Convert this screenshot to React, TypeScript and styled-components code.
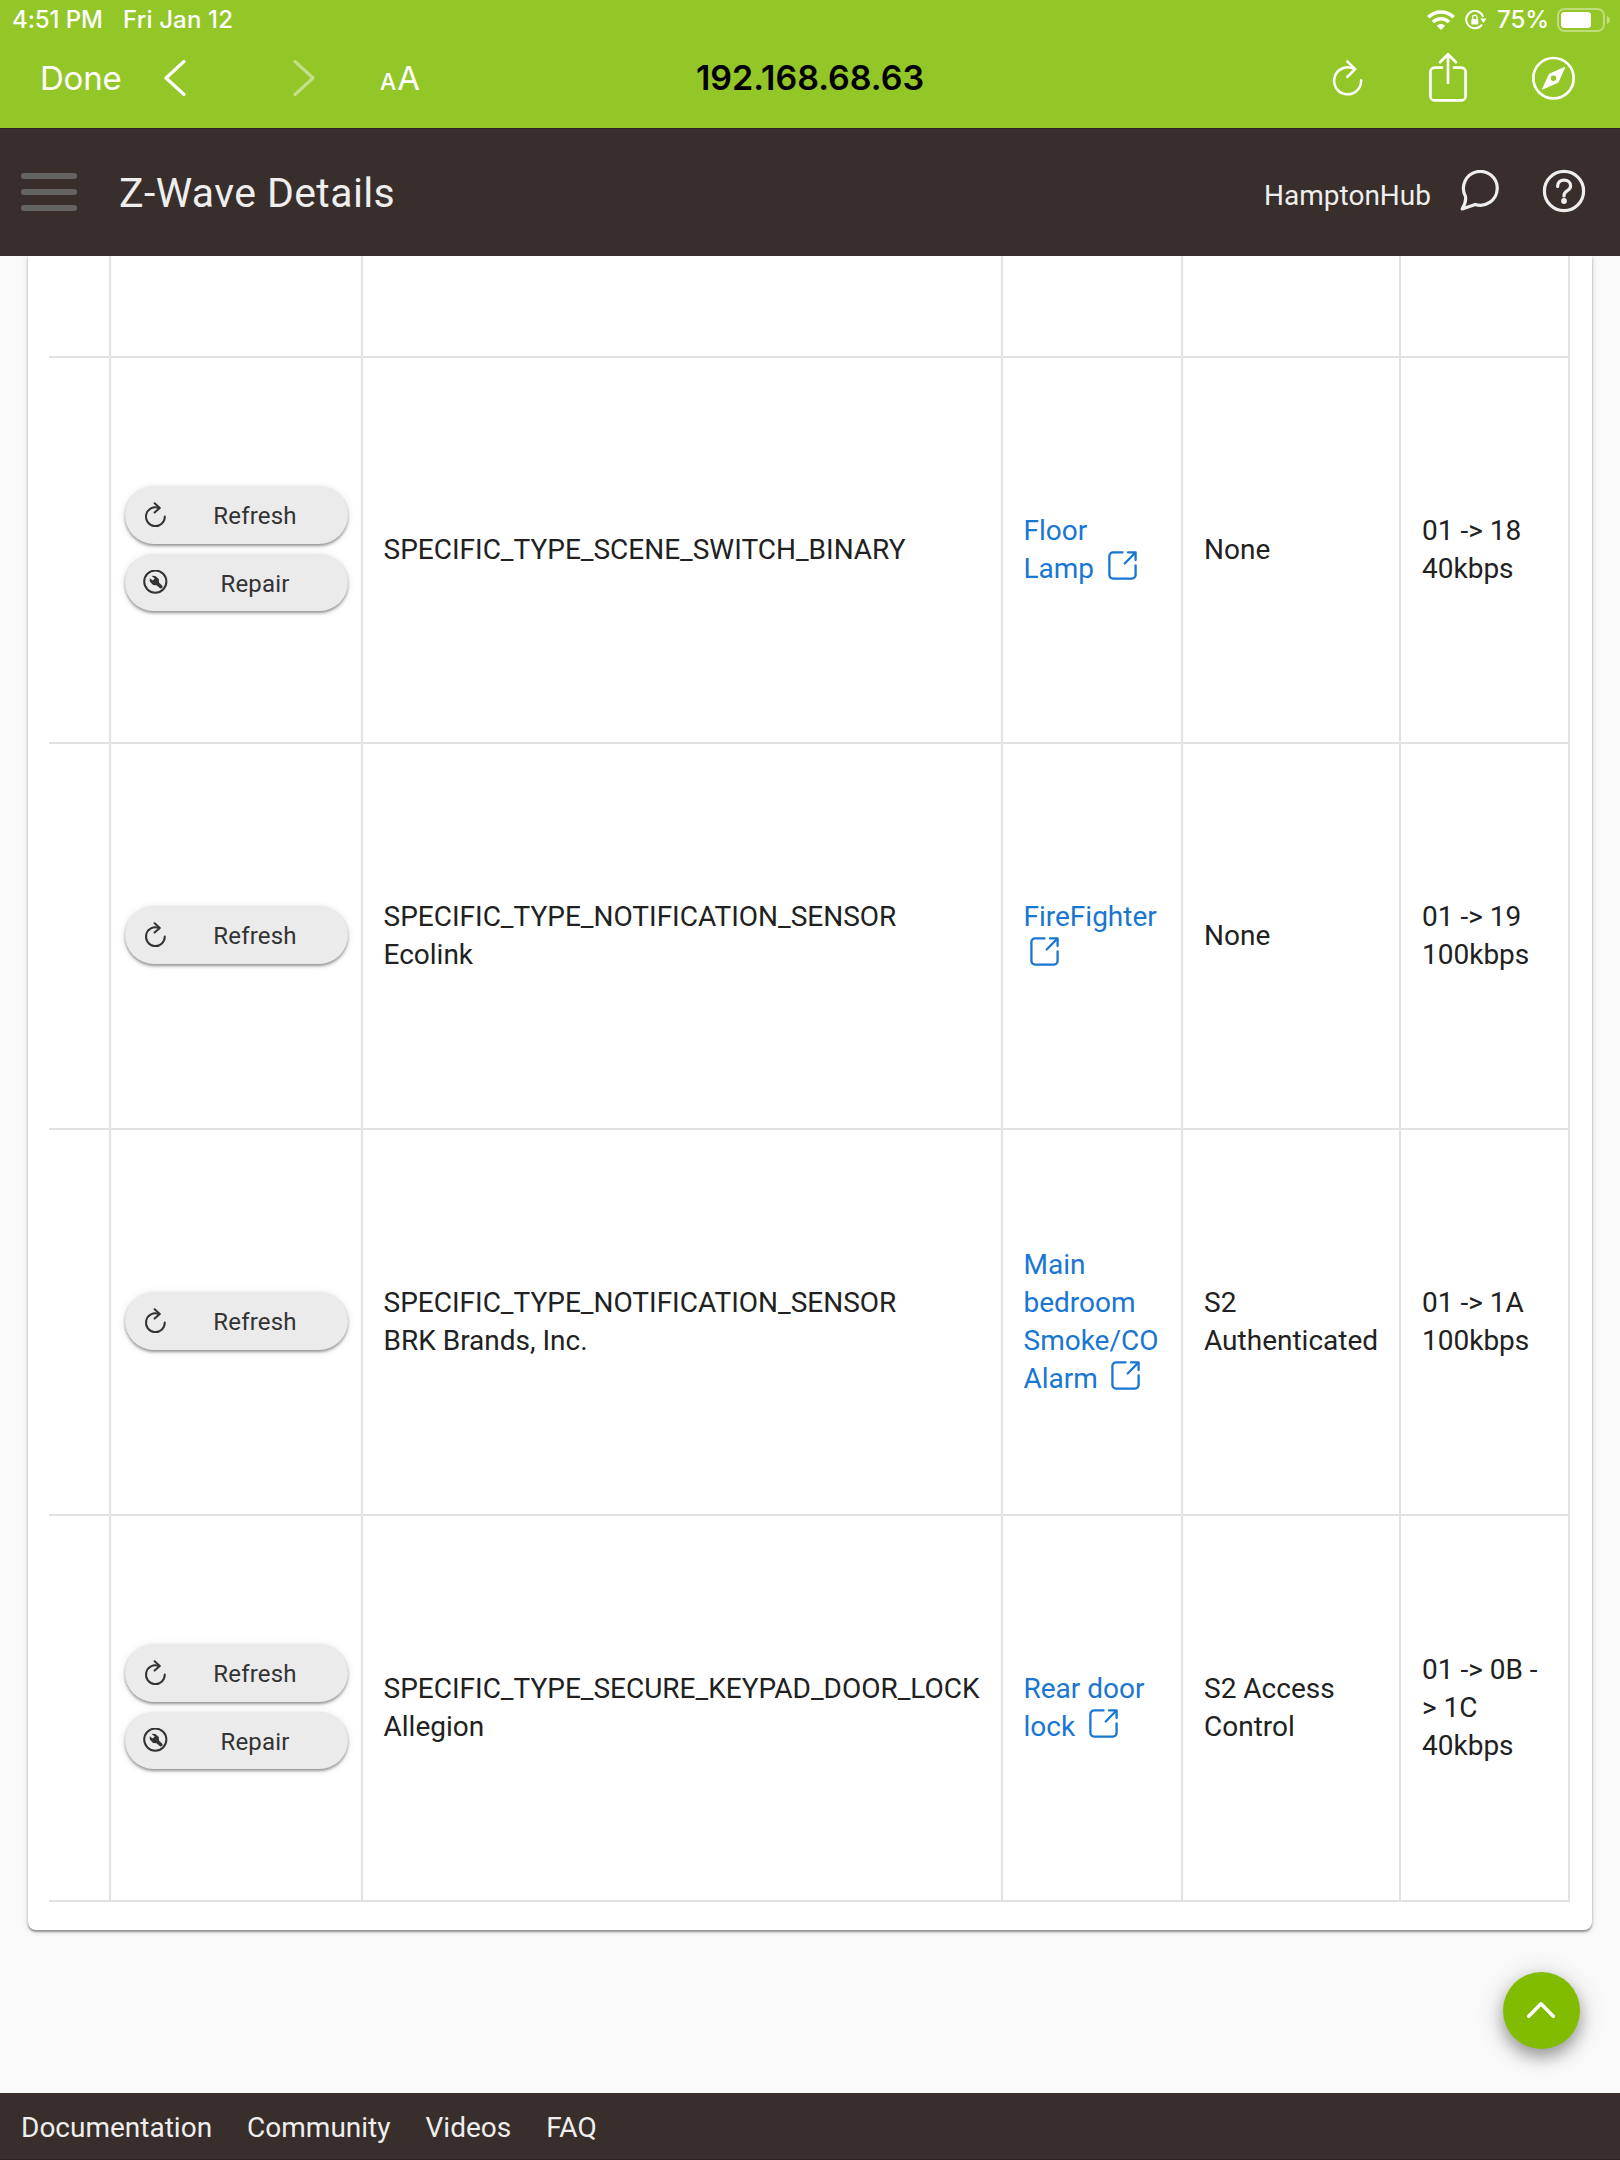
import React from "react";
import styled, { createGlobalStyle } from "styled-components";

const GlobalStyle = createGlobalStyle`
  * { box-sizing: border-box; }
  html, body { margin: 0; padding: 0; }
  body { background: #fafafa; font-family: Roboto, "Liberation Sans", sans-serif; }
  svg { display: block; flex: none; }
`;

const Page = styled.div`
  width: 1620px;
  height: 2160px;
  display: flex;
  flex-direction: column;
  overflow: hidden;
  background: #fafafa;
  position: relative;
`;

const BrowserChrome = styled.header`
  height: 128px;
  flex: none;
  background: #93c627;
  color: #fff;
  font-family: Inter, "Liberation Sans", sans-serif;
`;

const StatusBar = styled.div`
  height: 40px;
  display: flex;
  align-items: center;
  padding: 0 9px 0 12px;
  font-size: 24px;
  font-weight: 500;
  line-height: 40px;
`;

const StatusText = styled.span<{ $width: number; $spacing?: number; $gap?: number }>`
  width: ${(p) => p.$width}px;
  letter-spacing: ${(p) => p.$spacing ?? 0}px;
  margin-right: ${(p) => p.$gap ?? 0}px;
  white-space: nowrap;
`;

const StatusIcons = styled.div`
  display: flex;
  align-items: center;
  gap: 10px;
  margin-left: auto;
`;

const NavBar = styled.nav`
  height: 76px;
  display: grid;
  grid-template-columns: 1fr auto 1fr;
  align-items: center;
`;

const NavGroup = styled.div`
  display: flex;
  align-items: center;
  padding-left: 40px;
`;

const NavActions = styled.div`
  display: flex;
  align-items: center;
  justify-content: flex-end;
  gap: 64px;
  padding: 0 44px 0 0;
`;

const HistoryButtons = styled.div`
  display: flex;
  gap: 107px;
`;

const Done = styled.span`
  width: 124px;
  font-size: 33px;
  line-height: 40px;
  letter-spacing: -0.2px;
`;

const TextSize = styled.span`
  margin-left: 65px;
  display: flex;
  align-items: baseline;
  font-size: 33px;
  line-height: 40px;
  padding-top: 3px;
`;

const SmallA = styled.span`
  font-size: 23px;
  font-weight: 500;
  margin-right: 1px;
`;

const Address = styled.span`
  font-size: 34px;
  font-weight: 600;
  line-height: 40px;
  letter-spacing: 0;
  color: #000;
`;

const AppBar = styled.header`
  height: 128px;
  flex: none;
  display: flex;
  align-items: center;
  padding: 0 34px 0 21px;
  background: #382e2c;
  border-top: 1px solid #2a2422;
  color: #eee;
`;

const MenuButton = styled.div`
  width: 56px;
  display: flex;
  flex-direction: column;
  gap: 10.4px;
  margin-right: 42px;
  padding-bottom: 1px;
`;

const MenuBar = styled.div`
  height: 6px;
  border-radius: 3px;
  background: #646462;
`;

const Title = styled.h1`
  flex: 1;
  margin: 0;
  font-size: 41px;
  font-weight: 400;
  line-height: 50px;
  letter-spacing: 0.4px;
`;

const HubName = styled.span`
  font-size: 28px;
  line-height: 38px;
  margin: 7px 29px 0 0;
`;

const HeaderIcons = styled.div`
  display: flex;
  align-items: center;
  gap: 42px;
  padding-bottom: 4px;
`;

const Content = styled.main`
  flex: 1;
  min-height: 0;
  overflow: hidden;
  padding: 0 28px;
`;

const Card = styled.section`
  height: 1674px;
  padding: 0 22px 0 21px;
  background: #fff;
  border-radius: 0 0 8px 8px;
  box-shadow: 0 2px 2px rgba(0, 0, 0, 0.36), 0 1px 6px rgba(0, 0, 0, 0.16);
`;

const Row = styled.div<{ $height: number }>`
  height: ${(p) => p.$height}px;
  display: grid;
  grid-template-columns: 62px 252px 640px 180px 218px 169px;
  border-bottom: 2px solid #e2e2e2;
`;

const Cell = styled.div<{ $indent?: number }>`
  display: flex;
  flex-direction: column;
  justify-content: center;
  padding-left: ${(p) => p.$indent ?? 20}px;
  border-right: 2px solid #e2e2e2;
  font-size: 28px;
  line-height: 38px;
  color: #212121;
  white-space: pre-line;
`;

const ActionCell = styled(Cell)`
  gap: 10px;
  padding: 0 14px 3px;
`;

const ActionButton = styled.button<{ $height?: number }>`
  width: 223px;
  height: ${(p) => p.$height ?? 58}px;
  display: flex;
  align-items: center;
  border: 0;
  border-radius: 29px;
  padding: 0 0 0 18px;
  background: #ebebeb;
  color: #333;
  font: 400 24px/34px Roboto, sans-serif;
  letter-spacing: 0.2px;
  box-shadow: 0 2px 3px rgba(0, 0, 0, 0.38), 0 1px 8px rgba(0, 0, 0, 0.1);
`;

const ActionLabel = styled.span`
  flex: 1;
  text-align: center;
  padding: 2px 7px 0 0;
`;

const DeviceLink = styled.a`
  color: #1976d2;
  text-decoration: none;
  svg { display: inline-block; margin-left: 6.5px; vertical-align: -2px; }
`;

const ScrollTop = styled.button`
  position: absolute;
  left: 1503px;
  top: 1972px;
  width: 77px;
  height: 77px;
  display: flex;
  align-items: center;
  justify-content: center;
  border: 0;
  padding: 0 1px 1px 0;
  border-radius: 50%;
  background: #82bc00;
  box-shadow: 0 8px 16px rgba(0, 0, 0, 0.32), 0 4px 30px rgba(0, 0, 0, 0.16);
`;

const Footer = styled.footer`
  height: 67px;
  flex: none;
  position: relative;
  display: flex;
  align-items: center;
  gap: 35px;
  padding: 3px 0 0 21px;
  background: #382e2c;
  border-bottom: 1px solid #2a2422;
  color: #eee;
  font-size: 28px;
  line-height: 38px;
`;

const WifiIcon = () => (
  <svg width="28" height="20" viewBox="0 0 28 20" fill="none" stroke="#fff" strokeWidth="3.5">
    <path d="M1.3 7.2C8.4.2 19.6.2 26.7 7.2" />
    <path d="M6 12C10.6 7.6 17.4 7.6 22 12" />
    <path d="M14 20l-4.2-4.3c2.4-2.3 6-2.3 8.4 0z" fill="#fff" stroke="none" />
  </svg>
);

const RotationLockIcon = () => (
  <svg width="22" height="20" viewBox="0 0 22 20" fill="none" stroke="#fff" strokeWidth="2">
    <path d="M18.2 7A8.7 8.7 0 1 0 17 14.6" />
    <path d="M15.2 8.5h6.3l-3.1 4.5z" fill="#fff" stroke="none" />
    <rect x="6.3" y="9" width="7" height="5.5" rx="1" fill="#fff" stroke="none" />
    <path d="M7.6 9.2V7.4a2.2 2.2 0 0 1 4.4 0v1.8" strokeWidth="1.3" />
  </svg>
);

const BatteryIcon = () => (
  <svg width="54" height="24" viewBox="0 0 54 24">
    <rect x="1" y="1" width="46" height="22" rx="6.5" fill="none" stroke="#fff" strokeOpacity=".4" strokeWidth="2" />
    <rect x="4" y="4" width="30" height="16" rx="3.5" fill="#fff" />
    <path d="M50 8c3.8 1.6 3.8 6.4 0 8z" fill="#fff" fillOpacity=".45" />
  </svg>
);

const Chevron = ({ forward = false }: { forward?: boolean }) => (
  <svg width="22" height="38" viewBox="0 0 22 38" fill="none" stroke="#fff" strokeWidth="3.2" strokeLinecap="round" strokeLinejoin="round" opacity={forward ? 0.45 : 1}>
    <path d={forward ? "M2 2.5L20 19 2 35.5" : "M20 2.5L2 19l18 16.5"} />
  </svg>
);

const ReloadIcon = () => (
  <svg width="33" height="38" viewBox="0 0 33 38" fill="none" stroke="#fff" strokeWidth="2.5" strokeLinecap="round" strokeLinejoin="round">
    <path d="M21.5 9.7A13.5 13.5 0 1 0 29.1 21.3" />
    <path d="M15.2 2.4l8 7.8-8 7.8" />
  </svg>
);

const ShareIcon = () => (
  <svg width="39" height="52" viewBox="0 0 39 52" fill="none" stroke="#fff" strokeWidth="2.7" strokeLinecap="round" strokeLinejoin="round">
    <path d="M13 15.6H5.6a4.2 4.2 0 0 0-4.2 4.2v24.4a4.2 4.2 0 0 0 4.2 4.2h26.8a4.2 4.2 0 0 0 4.2-4.2V19.8a4.2 4.2 0 0 0-4.2-4.2H25" />
    <path d="M19 31V2.2M11 10.2l8-8 8 8" />
  </svg>
);

const CompassIcon = () => (
  <svg width="44" height="44" viewBox="0 0 44 44" fill="none" stroke="#fff" strokeWidth="2.7">
    <circle cx="21.5" cy="22.2" r="20.2" />
    <path fillRule="evenodd" fill="#fff" stroke="#fff" strokeWidth="1" strokeLinejoin="round" d="M32.7 11.4L26.1 26.2 10.5 33.2 17.3 18.2zM21.5 18.9a3.3 3.3 0 1 0 0 6.6 3.3 3.3 0 0 0 0-6.6z" />
  </svg>
);

const ChatIcon = () => (
  <svg width="40" height="41" viewBox="0 0 40 41" fill="none" stroke="#eee" strokeWidth="3.2" strokeLinejoin="round">
    <path d="M5.4 26.2A16.9 16.9 0 1 1 15.2 34.4L2.2 38.9Q6.6 31.8 5.4 26.2z" />
  </svg>
);

const HelpIcon = () => (
  <svg width="44" height="44" viewBox="0 0 44 44" fill="none" stroke="#eee" strokeWidth="3.2" strokeLinecap="round">
    <circle cx="22" cy="22" r="19.6" />
    <path d="M15.6 17.4c0-3.9 2.7-6.3 6.5-6.3s6.5 2.3 6.5 5.8c0 4.9-6.6 4.7-6.6 9.3v.8" />
    <circle cx="22" cy="32" r="2.9" fill="#eee" stroke="none" />
  </svg>
);

const RefreshIcon = () => (
  <svg width="26" height="26" viewBox="0 0 26 26" fill="none" stroke="#333" strokeWidth="2" strokeLinecap="round" strokeLinejoin="round">
    <path d="M15.6 5.8A9.4 9.4 0 1 0 21.8 14.6" />
    <path d="M11.6 1.2l5.2 4.7-5.2 4.7" />
  </svg>
);

const RepairIcon = () => (
  <svg width="26" height="26" viewBox="0 0 26 26">
    <circle cx="12.3" cy="11.6" r="11.1" fill="none" stroke="#333" strokeWidth="2" />
    <path fill="#333" d="M8.4 5.8l3.9.1 3.5 3.2.2 3.4 3.5 3.6-.2 2-2 .4-3.8-3.2-3.4-.4-3.3-3.4-.1-3.3 3.1 2.3 1.9-2z" />
  </svg>
);

const ExternalIcon = () => (
  <svg width="29" height="29" viewBox="0 0 29 29" fill="none" stroke="#1976d2" strokeWidth="2.3" strokeLinecap="round" strokeLinejoin="round">
    <path d="M14.5 1.4H5A3.6 3.6 0 0 0 1.4 5v19A3.6 3.6 0 0 0 5 27.6h19A3.6 3.6 0 0 0 27.6 24V14.5" />
    <path d="M20 1.4h7.6V9M27.2 1.8L16.7 12.5" />
  </svg>
);

interface Device {
  type: string;
  repair?: boolean;
  name: string;
  security: string;
  route: string;
}

const devices: Device[] = [
  { type: "SPECIFIC_TYPE_SCENE_SWITCH_BINARY", repair: true, name: "Floor\nLamp ", security: "None", route: "01 -> 18\n40kbps" },
  { type: "SPECIFIC_TYPE_NOTIFICATION_SENSOR\nEcolink", name: "FireFighter\n", security: "None", route: "01 -> 19\n100kbps" },
  { type: "SPECIFIC_TYPE_NOTIFICATION_SENSOR\nBRK Brands, Inc.", name: "Main\nbedroom\nSmoke/CO\nAlarm ", security: "S2\nAuthenticated", route: "01 -> 1A\n100kbps" },
  { type: "SPECIFIC_TYPE_SECURE_KEYPAD_DOOR_LOCK\nAllegion", repair: true, name: "Rear door\nlock ", security: "S2 Access\nControl", route: "01 -> 0B -\n> 1C\n40kbps" },
];

export default function App() {
  return (
    <Page>
      <GlobalStyle />
      <BrowserChrome>
        <StatusBar>
          <StatusText $width={88} $gap={23} $spacing={-0.1}>4:51 PM</StatusText>
          <StatusText $width={112} $spacing={0.15}>Fri Jan 12</StatusText>
          <StatusIcons>
            <WifiIcon />
            <RotationLockIcon />
            <StatusText $width={50}>75%</StatusText>
            <BatteryIcon />
          </StatusIcons>
        </StatusBar>
        <NavBar>
          <NavGroup>
            <Done>Done</Done>
            <HistoryButtons>
              <Chevron />
              <Chevron forward />
            </HistoryButtons>
            <TextSize><SmallA>A</SmallA>A</TextSize>
          </NavGroup>
          <Address>192.168.68.63</Address>
          <NavActions>
            <ReloadIcon />
            <ShareIcon />
            <CompassIcon />
          </NavActions>
        </NavBar>
      </BrowserChrome>
      <AppBar>
        <MenuButton><MenuBar /><MenuBar /><MenuBar /></MenuButton>
        <Title>Z-Wave Details</Title>
        <HubName>HamptonHub</HubName>
        <HeaderIcons>
          <ChatIcon />
          <HelpIcon />
        </HeaderIcons>
      </AppBar>
      <Content>
        <Card>
          <Row $height={102}>
            <Cell /><Cell /><Cell /><Cell /><Cell /><Cell />
          </Row>
          {devices.map((d) => (
            <Row key={d.name} $height={386}>
              <Cell />
              <ActionCell>
                <ActionButton><RefreshIcon /><ActionLabel>Refresh</ActionLabel></ActionButton>
                {d.repair && <ActionButton $height={57}><RepairIcon /><ActionLabel>Repair</ActionLabel></ActionButton>}
              </ActionCell>
              <Cell $indent={20.5}>{d.type}</Cell>
              <Cell $indent={20.5}><DeviceLink>{d.name}<ExternalIcon /></DeviceLink></Cell>
              <Cell $indent={21}>{d.security}</Cell>
              <Cell $indent={21}>{d.route}</Cell>
            </Row>
          ))}
        </Card>
      </Content>
      <ScrollTop>
        <svg width="30" height="18" viewBox="0 0 30 18" fill="none" stroke="#fff" strokeWidth="3.5" strokeLinecap="round" strokeLinejoin="round">
          <path d="M2.7 15.2L15 2.8l12.3 12.4" />
        </svg>
      </ScrollTop>
      <Footer>
        <span>Documentation</span>
        <span>Community</span>
        <span>Videos</span>
        <span>FAQ</span>
      </Footer>
    </Page>
  );
}
